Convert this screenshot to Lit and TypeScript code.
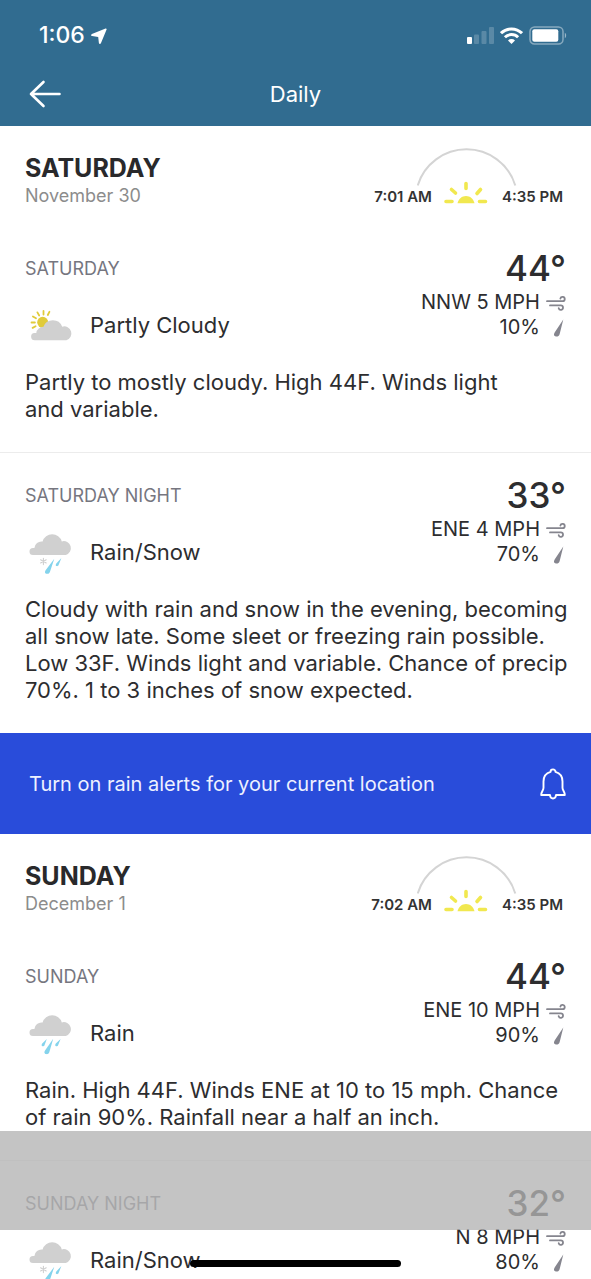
import { LitElement, html, css, svg, nothing } from "lit";
import { customElement, property } from "lit/decorators.js";

type Sky = "partly-cloudy" | "rain" | "rain-snow";

interface Period {
  label: string;
  sky: Sky;
  condition: string;
  temp: number;
  wind: string;
  precip: number;
  details?: string;
}

interface Day {
  name: string;
  date: string;
  sunrise: string;
  sunset: string;
  periods: Period[];
}

const days: Day[] = [
  {
    name: "SATURDAY",
    date: "November 30",
    sunrise: "7:01 AM",
    sunset: "4:35 PM",
    periods: [
      {
        label: "SATURDAY",
        sky: "partly-cloudy",
        condition: "Partly Cloudy",
        temp: 44,
        wind: "NNW 5 MPH",
        precip: 10,
        details: "Partly to mostly cloudy. High 44F. Winds light and\u00a0variable.",
      },
      {
        label: "SATURDAY NIGHT",
        sky: "rain-snow",
        condition: "Rain/Snow",
        temp: 33,
        wind: "ENE 4 MPH",
        precip: 70,
        details:
          "Cloudy with rain and snow in the evening, becoming all snow late. Some sleet or freezing rain possible. Low 33F. Winds light and variable. Chance of precip 70%. 1 to 3 inches of snow expected.",
      },
    ],
  },
  {
    name: "SUNDAY",
    date: "December 1",
    sunrise: "7:02 AM",
    sunset: "4:35 PM",
    periods: [
      {
        label: "SUNDAY",
        sky: "rain",
        condition: "Rain",
        temp: 44,
        wind: "ENE 10 MPH",
        precip: 90,
        details: "Rain. High 44F. Winds ENE at 10 to 15 mph. Chance of rain 90%. Rainfall near a half an inch.",
      },
      {
        label: "SUNDAY NIGHT",
        sky: "rain-snow",
        condition: "Rain/Snow",
        temp: 32,
        wind: "N 8 MPH",
        precip: 80,
      },
    ],
  },
];

const cloud = svg`<path fill="#d0d0d0" d="M7 27a3.500 3.500 0 0 1 0-7h1.400A7 7 0 0 1 16.600 13.500a10 10 0 0 1 19.200-.1A7 7 0 1 1 39.800 27Z"/>`;

const skyArt = {
  "partly-cloudy": svg`
    <g stroke="#e0cb3a" stroke-width="1.800" stroke-linecap="round">
      <path d="M17.500 13.500V10M21.800 14 23.400 10.800M13.200 14.500 11.400 11.400M10 17.300 6.900 15.400M8.900 21.500H5.500M9.600 25.200 6.600 26.900"/>
    </g>
    <circle cx="16.700" cy="21.300" r="5.500" fill="#e0cb3a"/>
    <path fill="#d0d0d0" d="M9 39.300a3.700 3.700 0 0 1-.4-7.400h1.700a7 7 0 0 1 7.200-6.200 10 10 0 0 1 18.700 0 6.900 6.900 0 1 1 4.200 13.600Z"/>`,
  rain: svg`${cloud}
    <g fill="#84d3ec">
      <path d="M20.800 30 16.200 34.600c-1 1.700-.5 2.500.3 2.700s1.700-.2 2.100-1.400Z"/>
      <path d="M27.200 29.800 19.200 41.300c-1.500 2.400-.6 3.500.8 3.800s2.800-.3 3.300-1.900Z"/>
      <path d="M34.600 30 29.800 34.600c-1 1.700-.5 2.500.3 2.700s1.700-.2 2.100-1.400Z"/>
    </g>`,
  "rain-snow": svg`${cloud}
    <path stroke="#cfcfcf" stroke-width="1.100" stroke-linecap="round" d="M17.400 30.200v6.400M14.600 31.800l5.600 3.200M20.200 31.800l-5.600 3.200"/>
    <g fill="#84d3ec">
      <path d="M28.300 30.800 19.800 42c-1.500 2.400-.6 3.500.8 3.800s2.800-.3 3.300-1.900Z"/>
      <path d="M35.400 30 30.300 35.400c-1 1.700-.5 2.500.3 2.700s1.700-.2 2.100-1.400Z"/>
    </g>`,
};

@customElement("sky-icon")
export class SkyIcon extends LitElement {
  @property() sky: Sky = "rain";

  static styles = css`
    :host {
      display: block;
      width: 48px;
      height: 48px;
    }
    .art {
      display: block;
      width: 100%;
      height: 100%;
    }
  `;

  render() {
    return html`<svg class="art" viewBox="0 0 48 48" fill="none" aria-hidden="true">${skyArt[this.sky]}</svg>`;
  }
}

@customElement("sun-times")
export class SunTimes extends LitElement {
  @property() sunrise = "";
  @property() sunset = "";

  static styles = css`
    :host {
      display: grid;
      grid-template-columns: auto 44px auto;
      column-gap: 13px;
      align-items: end;
      font-size: 15px;
      line-height: 18px;
      font-weight: 600;
      color: #333;
    }
    .arc {
      display: block;
      width: 100px;
      height: 58px;
      margin: 0 -28px;
    }
  `;

  render() {
    return html`
      <time>${this.sunrise}</time>
      <svg class="arc" viewBox="0 0 100 58" fill="none" aria-hidden="true">
        <path d="M.7 37.500A51 51 0 0 1 98.300 37.500" stroke="#d4d4d4" stroke-width="2" />
        <path
          d="M29 53.500h6M62.500 53.500h6M34.500 41.500l4 3.500M63.500 41.500l-3.500 4M49 35.500v5"
          stroke="#f1e84f"
          stroke-width="3.600"
          stroke-linecap="round"
        />
        <path d="M40.500 55.300c1-4.500 4.500-7.300 8.500-7.300s7.500 2.800 8.500 7.300Z" fill="#f1e84f" />
      </svg>
      <time>${this.sunset}</time>
    `;
  }
}

@customElement("forecast-period")
export class ForecastPeriod extends LitElement {
  @property({ attribute: false }) period!: Period;

  static styles = css`
    :host {
      display: block;
      padding: 24px 25px 29px;
      color: #2d2d2f;
    }
    .summary {
      display: flex;
      justify-content: space-between;
      min-height: 119px;
    }
    .label {
      margin: 7px 0 20px;
      font-size: 18px;
      line-height: 24px;
      font-weight: 400;
      color: #76767f;
    }
    .condition {
      display: flex;
      align-items: center;
      gap: 16px;
      padding-left: 1px;
      font-size: 22px;
      line-height: 28px;
    }
    .readings {
      text-align: right;
      font-size: 20px;
      line-height: 25px;
    }
    .temp {
      margin-bottom: 3px;
      font-size: 35px;
      line-height: 37px;
      font-weight: 500;
    }
    .reading {
      display: flex;
      justify-content: flex-end;
      align-items: center;
      gap: 6px;
    }
    .glyph {
      width: 20px;
      height: 20px;
    }
    .details {
      margin: 0 -12px 0 0;
      font-size: 22px;
      line-height: 27px;
    }
  `;

  render() {
    const p = this.period;
    return html`
      <div class="summary">
        <div>
          <h3 class="label">${p.label}</h3>
          <div class="condition"><sky-icon .sky=${p.sky}></sky-icon><span>${p.condition}</span></div>
        </div>
        <div class="readings">
          <div class="temp">${p.temp}°</div>
          <div class="reading">
            <span>${p.wind}</span>
            <svg class="glyph" viewBox="0 0 20 20" fill="none" stroke="#85858e" stroke-width="1.800" stroke-linecap="round" aria-hidden="true">
              <path d="M1 8.200h15.600a2.200 2.200 0 1 0-2.200-2.700M4 12.400h10.800a2.200 2.200 0 1 1-2.100 2.800" />
            </svg>
          </div>
          <div class="reading">
            <span>${p.precip}%</span>
            <svg class="glyph" viewBox="0 0 20 20" fill="#85858e" aria-hidden="true">
              <path d="M17.300 1.500 8.800 14.300c-1.600 2.800-.5 3.900 1.100 4.200s3.200-.4 3.700-2.200Z" />
            </svg>
          </div>
        </div>
      </div>
      ${p.details ? html`<p class="details">${p.details}</p>` : nothing}
    `;
  }
}

@customElement("app-root")
export class AppRoot extends LitElement {
  static styles = css`
    :host {
      display: block;
      position: relative;
      height: 100vh;
      overflow: hidden;
      background: #fff;
      font-family: Inter, "Liberation Sans", sans-serif;
    }
    .top {
      background: #316c90;
      color: #fff;
    }
    .status {
      display: flex;
      justify-content: space-between;
      align-items: center;
      padding: 22px 24px 14px 39px;
      font-size: 23px;
      line-height: 27px;
      font-weight: 500;
    }
    .clock,
    .signals {
      display: flex;
      align-items: center;
      gap: 6px;
    }
    .nav {
      display: grid;
      grid-template-columns: 40px 1fr 40px;
      align-items: center;
      padding: 11px 25px 12px;
    }
    .back {
      display: flex;
      align-items: center;
      justify-content: center;
      width: 40px;
      height: 40px;
      padding: 0;
      border: 0;
      background: none;
      color: inherit;
    }
    .heading {
      margin: 0;
      text-align: center;
      font-size: 22px;
      line-height: 28px;
      font-weight: 400;
    }
    .day-head {
      display: flex;
      justify-content: space-between;
      align-items: flex-start;
      padding: 22px 28px 19px 25px;
    }
    .day-name {
      margin: 0;
      padding-top: 4px;
      font-size: 25px;
      line-height: 32px;
      font-weight: 700;
      color: #29292b;
    }
    .date {
      margin: 0;
      font-size: 18px;
      line-height: 23px;
      color: #8c8c8c;
    }
    .divided {
      border-top: 1px solid #ececec;
    }
    .alert {
      display: flex;
      justify-content: space-between;
      align-items: center;
      width: 100%;
      min-height: 101px;
      padding: 0 25px 0 29px;
      border: 0;
      background: #294cda;
      color: #eef1ff;
      font: inherit;
      font-size: 20px;
      line-height: 26px;
      text-align: left;
    }
    .ad-slot {
      position: absolute;
      left: 0;
      right: 0;
      bottom: 49px;
      height: 99px;
      background: rgba(179, 179, 179, 0.78);
    }
    .home {
      position: absolute;
      left: 0;
      right: 0;
      bottom: 12px;
      width: 211px;
      height: 7px;
      margin: 0 auto;
      border-radius: 4px;
      background: #000;
    }
  `;

  private renderDay(day: Day) {
    return html`
      <section>
        <div class="day-head">
          <div>
            <h2 class="day-name">${day.name}</h2>
            <p class="date">${day.date}</p>
          </div>
          <sun-times .sunrise=${day.sunrise} .sunset=${day.sunset}></sun-times>
        </div>
        ${day.periods.map(
          (p, i) => html`<forecast-period class=${i ? "divided" : ""} .period=${p}></forecast-period>`
        )}
      </section>
    `;
  }

  render() {
    return html`
      <header class="top">
        <div class="status">
          <div class="clock">
            <span>1:06</span>
            <svg width="16" height="16" viewBox="0 0 16 16" fill="#fff" aria-hidden="true">
              <path d="M14.600.5.900 6.100c-1.100.5-.9 1.900.2 2l6.100.8.700 6.100c.2 1.100 1.500 1.300 2 .2L15.600 1.500c.2-.7-.3-1.200-1-1Z" />
            </svg>
          </div>
          <div class="signals">
            <svg width="27" height="17" viewBox="0 0 27 17" fill="#fff" aria-hidden="true">
              <rect x="0" y="10" width="5" height="7" rx="1" />
              <g opacity=".2">
                <rect x="7" y="7.500" width="5" height="9.500" rx="1" />
                <rect x="14.500" y="4" width="5" height="13" rx="1" />
                <rect x="22" y="0" width="5" height="17" rx="1" />
              </g>
            </svg>
            <svg width="23" height="17" viewBox="0 0 23 17" fill="none" stroke="#fff" stroke-width="3" aria-hidden="true">
              <path d="M1 6.200a15 15 0 0 1 21 0M4.900 10.300a9.400 9.400 0 0 1 13.200 0" />
              <path d="M11.500 17 8 13.500a5 5 0 0 1 7 0Z" fill="#fff" stroke="none" />
            </svg>
            <svg width="38" height="19" viewBox="0 0 38 19" fill="none" aria-hidden="true">
              <rect x="1" y="1" width="33" height="17" rx="4.500" stroke="#fff" stroke-opacity=".42" stroke-width="1.500" />
              <rect x="3.300" y="3.300" width="26" height="12.400" rx="2" fill="#fff" />
              <path d="M35.800 6.800c1.800.8 1.800 4.600 0 5.400Z" fill="#fff" fill-opacity=".5" />
            </svg>
          </div>
        </div>
        <div class="nav">
          <button class="back" aria-label="Back">
            <svg width="32" height="28" viewBox="0 0 32 28" fill="none" stroke="#fff" stroke-width="2.600" stroke-linecap="round" stroke-linejoin="round" aria-hidden="true">
              <path d="M30.500 14H2M14.500 2 2 14l12.500 12" />
            </svg>
          </button>
          <h1 class="heading">Daily</h1>
        </div>
      </header>
      <main>
        ${this.renderDay(days[0])}
        <button class="alert">
          <span>Turn on rain alerts for your current location</span>
          <svg width="26" height="32" viewBox="0 0 26 32" fill="none" stroke="#fff" stroke-width="1.900" stroke-linejoin="round" stroke-linecap="round" aria-hidden="true">
            <path d="M10.500 3.900a2.500 2.500 0 0 1 5 0c4.600 1.300 7 4.800 7 9.600v6.200c0 2.900 2.300 3.900 2.300 7.300h-8.800c-.3 4.600-5.700 4.600-6 0H1.200c0-3.400 2.300-4.400 2.300-7.300v-6.200c0-4.800 2.400-8.300 7-9.600Z" />
          </svg>
        </button>
        ${this.renderDay(days[1])}
      </main>
      <div class="ad-slot"></div>
      <div class="home"></div>
    `;
  }
}
